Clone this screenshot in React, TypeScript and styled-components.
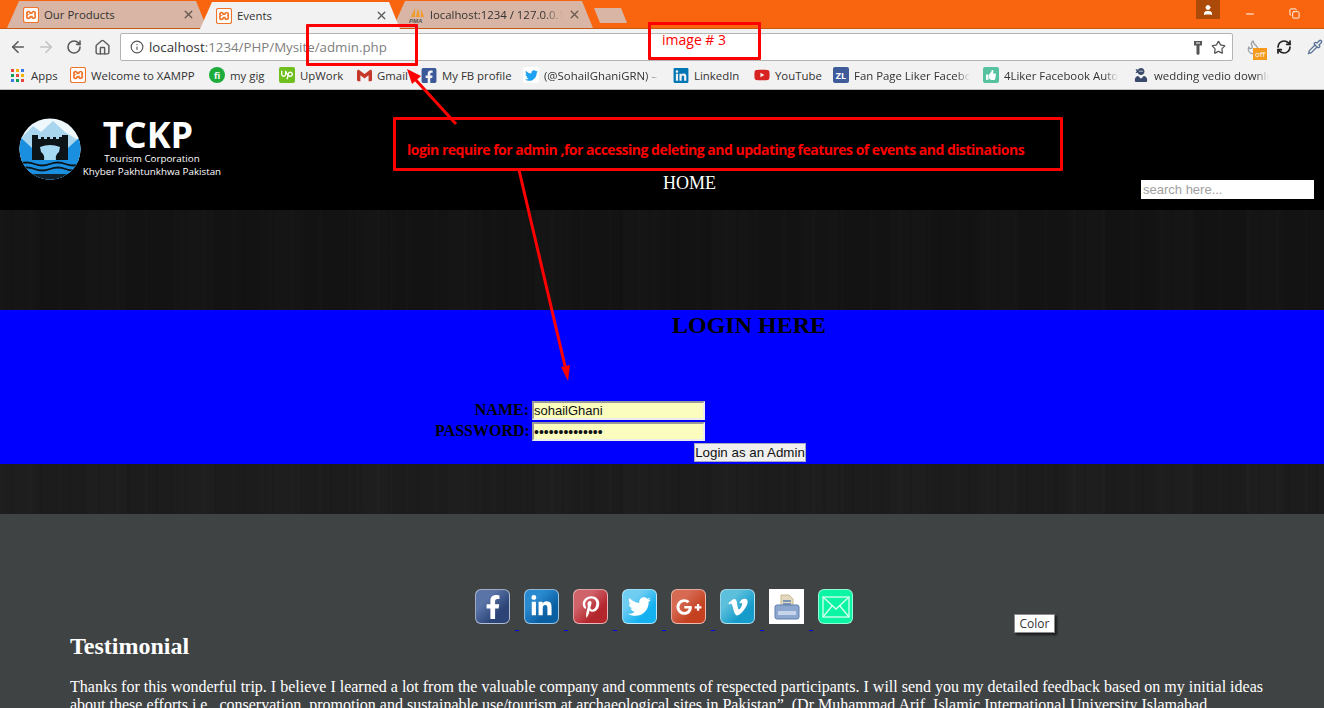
import React from 'react';
import styled, { createGlobalStyle } from 'styled-components';
import { ArrowLeft, ArrowRight, RotateCw, Home, Info, Star, X, Minus, Copy, User, RefreshCw, Pipette, Flame } from 'lucide-react';
import {
  FaFacebookF, FaFacebookSquare, FaLinkedinIn, FaPinterestP, FaTwitter, FaGooglePlusG, FaVimeoV, FaLinkedin, FaYoutube, FaThumbsUp, FaUserNinja,
} from 'react-icons/fa';
import { SiXampp, SiGmail, SiUpwork } from 'react-icons/si';

const GlobalStyle = createGlobalStyle`
  html, body {
    margin: 0;
    padding: 0;
    background: #3f4344;
  }
`;

const ORANGE = '#f9650e';

const Page = styled.div`
  position: relative;
  width: 1324px;
  height: 708px;
  overflow: hidden;
  font-family: "Liberation Serif", serif;
`;

const TabStrip = styled.div`
  display: flex;
  align-items: flex-end;
  height: 28px;
  padding-left: 7px;
  background: ${ORANGE};
  border-bottom: 1px solid #c8590f;
  box-sizing: content-box;
`;

const Tab = styled.div<{ $active?: boolean }>`
  position: relative;
  z-index: ${p => (p.$active ? 2 : 1)};
  display: flex;
  align-items: center;
  gap: 5px;
  width: 200px;
  height: 27px;
  margin-right: -7px;
  margin-bottom: ${p => (p.$active ? '-1px' : '0')};
  padding: 0 12px 0 16px;
  box-sizing: border-box;
  background: ${p => (p.$active ? '#f2f2f2' : '#d8b5a4')};
  clip-path: polygon(0 100%, 12px 0, calc(100% - 11px) 0, 100% 100%);
  font: 11.4px "Open Sans", sans-serif;
  color: #333;
  white-space: nowrap;
`;

const TabTitle = styled.span<{ $fade?: boolean }>`
  flex: 1;
  overflow: hidden;
  ${p => p.$fade && 'mask-image: linear-gradient(90deg, #000 85%, transparent);'}
`;

const NewTab = styled.div`
  width: 33px;
  height: 15px;
  margin: 0 0 5px 8px;
  background: #d8b5a4;
  clip-path: polygon(0 0, 27px 0, 100% 100%, 6px 100%);
`;

const WindowControls = styled.div`
  display: flex;
  align-items: flex-start;
  margin-left: auto;
  align-self: flex-start;
  color: #fff;
`;

const Avatar = styled.div`
  display: flex;
  align-items: center;
  justify-content: center;
  width: 24px;
  height: 19px;
  margin-right: 8px;
  background: #ac4a0a;
`;

const WinButton = styled.div<{ $w: number }>`
  display: flex;
  align-items: center;
  justify-content: center;
  width: ${p => p.$w}px;
  height: 27px;
`;

const Toolbar = styled.div`
  display: flex;
  align-items: center;
  height: 28px;
  padding: 4px 0 0 4px;
  background: #f2f2f2;
  color: #5a5a5a;
`;

const NavButton = styled.div<{ $dim?: boolean }>`
  display: flex;
  justify-content: center;
  width: 28px;
  color: ${p => (p.$dim ? '#c4c4c4' : '#5a5a5a')};
`;

const Omnibox = styled.div`
  display: flex;
  align-items: center;
  width: 1113px;
  height: 28px;
  margin-left: 4px;
  padding: 0 6px 0 9px;
  box-sizing: border-box;
  background: #fff;
  border: 1px solid #b4b4b4;
  border-radius: 2px;
  font: 13.3px "Open Sans", sans-serif;
`;

const Url = styled.div`
  flex: 1;
  margin-left: 5px;
  color: #808080;
  span { color: #333; }
`;

const StarSlot = styled.span`
  display: flex;
  margin-left: 8px;
  color: #555;
`;

const Extensions = styled.div`
  display: flex;
  align-items: center;
  gap: 15px;
  margin-left: 12px;
`;

const ExtBadge = styled.div`
  position: relative;
  display: flex;
  color: #9aa0a5;
`;

const OffTag = styled.span`
  position: absolute;
  right: -6px;
  bottom: -5px;
  width: 14px;
  height: 12px;
  background: #f59a1c;
  color: #fff;
  font: 8px/12px "Open Sans", sans-serif;
  text-align: center;
`;

const Bookmarks = styled.div`
  display: flex;
  align-items: center;
  height: 28px;
  padding-left: 11px;
  background: #f2f2f2;
  border-bottom: 1px solid #bdbdbd;
  font: 11.4px "Open Sans", sans-serif;
  color: #333;
  white-space: nowrap;
`;

const Bookmark = styled.div<{ $left: number }>`
  display: flex;
  align-items: center;
  gap: 5px;
  margin-left: ${p => p.$left}px;
`;

const BookmarkLabel = styled.span<{ $w: number; $fade?: boolean }>`
  display: block;
  width: ${p => p.$w}px;
  ${p => p.$fade && 'overflow: hidden; mask-image: linear-gradient(90deg, #000 88%, transparent);'}
`;

const IconTile = styled.span<{ $bg: string; $round?: boolean; $fg?: string }>`
  display: flex;
  align-items: center;
  justify-content: center;
  flex: none;
  width: 16px;
  height: 16px;
  background: ${p => p.$bg};
  color: ${p => p.$fg || '#fff'};
  border-radius: ${p => (p.$round ? '50%' : '2px')};
  font: bold 9px "Open Sans", sans-serif;
`;

const AppsGrid = styled.span`
  display: grid;
  grid-template-columns: repeat(3, 3px);
  gap: 2px;
  margin-right: 2px;
`;

const AppsDot = styled.i<{ $c: string }>`
  width: 3px;
  height: 3px;
  background: ${p => p.$c};
`;

const Header = styled.header`
  display: flex;
  height: 120px;
  background: #000;
  color: #fff;
`;

const LogoMark = styled.svg`
  width: 62px;
  height: 62px;
  margin: 28px 0 0 19px;
`;

const Brand = styled.div`
  width: 141px;
  padding-top: 27px;
  font-family: "Open Sans", sans-serif;
  text-align: center;
`;

const BrandName = styled.div`
  padding-right: 7px;
  font-size: 36px;
  font-weight: 700;
  line-height: 35px;
`;

const BrandLine = styled.div`
  padding-left: 1px;
  font-size: 9.8px;
  line-height: 13px;
  white-space: nowrap;
`;

const Nav = styled.a`
  align-self: flex-start;
  margin: 83px 0 0 441px;
  font-size: 18px;
  line-height: 20px;
  color: #fff;
`;

const Search = styled.input`
  align-self: flex-start;
  width: 173px;
  height: 19px;
  margin: 90px 10px 0 auto;
  padding: 1px 2px;
  box-sizing: border-box;
  border: 0;
  background: #fff;
  font: 13px "Liberation Sans", sans-serif;
  &::placeholder { color: #a0a0a0; opacity: 1; }
`;

const Wood = styled.div<{ $h: number; $base: string }>`
  height: ${p => p.$h}px;
  background:
    repeating-linear-gradient(90deg, rgba(255,255,255,0.008) 0 3px, transparent 3px 11px, rgba(0,0,0,0.08) 11px 13px, transparent 13px 29px),
    repeating-linear-gradient(90deg, rgba(255,255,255,0.008) 0 37px, transparent 37px 89px),
    ${p => p.$base};
`;

const LoginPanel = styled.section`
  height: 154px;
  background: #0000ff;
  color: #000;
`;

const LoginTitle = styled.h2`
  margin: 0 0 0 672px;
  padding-top: 2px;
  font-size: 24px;
  line-height: 27px;
`;

const LoginForm = styled.form`
  display: grid;
  grid-template-columns: 94px 174px;
  grid-auto-rows: 21px;
  column-gap: 3px;
  margin: 62px 0 0 435px;
`;

const FieldLabel = styled.label`
  font-size: 16px;
  font-weight: 700;
  line-height: 18px;
  text-align: right;
  white-space: nowrap;
`;

const FieldInput = styled.input`
  width: 173px;
  height: 19px;
  padding: 0;
  box-sizing: border-box;
  border: 2px solid #ececec;
  border-top-color: #9a9a9a;
  border-left-color: #9a9a9a;
  background: #fafdbd;
  font: 13px "Liberation Sans", sans-serif;
  color: #111;
  &[type='password'] { font-size: 14px; }
`;

const SubmitButton = styled.button`
  display: block;
  width: 112px;
  height: 19px;
  margin-left: 694px;
  padding: 0;
  border: 1px solid #a8a8c0;
  background: #efefef;
  font: 13.33px "Liberation Sans", sans-serif;
  color: #111;
  white-space: nowrap;
`;

const Footer = styled.footer`
  height: 194px;
  padding-left: 70px;
  background: #3f4344;
  color: #fff;
`;

const SocialRow = styled.div`
  display: flex;
  gap: 5px;
  margin-left: 405px;
  padding-top: 75px;
`;

const SocialLink = styled.a`
  display: flex;
  align-items: flex-end;
  gap: 5px;
  text-decoration: none;
`;

const SocialDash = styled.i`
  width: 4px;
  height: 1px;
  background: #0000ee;
`;

const SocialTile = styled.span<{ $bg: string; $plain?: boolean }>`
  display: flex;
  align-items: center;
  justify-content: center;
  width: 35px;
  height: 35px;
  margin-bottom: 7px;
  box-sizing: border-box;
  background: ${p => p.$bg};
  color: #fff;
  border: ${p => (p.$plain ? '0' : '1px solid rgba(255,255,255,0.55)')};
  border-radius: ${p => (p.$plain ? '0' : '6px')};
`;

const TestimonialTitle = styled.h2`
  margin: 0;
  padding-top: 2px;
  font-size: 24px;
  line-height: 27px;
`;

const TestimonialText = styled.p`
  width: 1200px;
  margin: 18px 0 0;
  font-size: 16px;
  line-height: 18px;
`;

const Tooltip = styled.div`
  position: absolute;
  left: 1014px;
  top: 614px;
  width: 41px;
  height: 19px;
  box-sizing: border-box;
  background: #fff;
  border: 1px solid #8c8c8c;
  box-shadow: 2px 2px 2px rgba(0, 0, 0, 0.6);
  font: 12px/17px "Open Sans", sans-serif;
  color: #333;
  text-align: center;
`;

const Callout = styled.div<{ $x: number; $y: number; $w: number; $h: number }>`
  position: absolute;
  z-index: 3;
  left: ${p => p.$x}px;
  top: ${p => p.$y}px;
  width: ${p => p.$w}px;
  height: ${p => p.$h}px;
  box-sizing: border-box;
  border: 3px solid #ff0000;
  border-radius: 1px;
`;

const CalloutLabel = styled.span`
  position: absolute;
  left: 11px;
  top: 5px;
  font: 14px "Open Sans", sans-serif;
  color: #ff0000;
  white-space: nowrap;
`;

const CalloutNote = styled.span`
  position: absolute;
  left: 11px;
  top: 20px;
  font: bold 14px "Open Sans", sans-serif;
  letter-spacing: -0.5px;
  color: #ff0000;
  white-space: nowrap;
`;

const ArrowLayer = styled.svg`
  position: absolute;
  z-index: 3;
  left: 0;
  top: 0;
  pointer-events: none;
`;

const XamppTile = () => (
  <IconTile $bg="#f0752b"><SiXampp size={14} /></IconTile>
);

const PmaIcon = () => (
  <svg width="16" height="16" viewBox="0 0 16 16">
    <path d="M2 10L6 1v9zM7 10l2-9 2 9zM12 10V2l3 8z" fill="#f09a2a" />
    <text x="0" y="15.5" fontSize="6" fontWeight="700" fontStyle="italic" fontFamily="Liberation Sans" fill="#555">PMA</text>
  </svg>
);

const KeyIcon = () => (
  <svg width="10" height="15" viewBox="0 0 10 15" fill="#555">
    <path d="M1 1h8v4.500H6.500V14L5 15 3.500 14V5.500H1z" />
    <rect x="3" y="2.500" width="4" height="1" fill="#fff" />
  </svg>
);

const bookmarks = [
  { left: 12, w: 107, label: 'Welcome to XAMPP', icon: <XamppTile /> },
  { left: 11, w: 37, label: 'my gig', icon: <IconTile $bg="#1dac3a" $round>fi</IconTile> },
  { left: 12, w: 45, label: 'UpWork', icon: <IconTile $bg="#6fbf1f"><SiUpwork size={12} /></IconTile> },
  { left: 11, w: 32, label: 'Gmail', icon: <IconTile $bg="transparent" $fg="#c5382c"><SiGmail size={15} /></IconTile> },
  { left: 12, w: 70, label: 'My FB profile', icon: <IconTile $bg="transparent" $fg="#3b5998"><FaFacebookSquare size={17} /></IconTile> },
  { left: 11, w: 116, label: '(@SohailGhaniGRN) –', fade: true, icon: <IconTile $bg="#fff" $fg="#1da1f2"><FaTwitter size={13} /></IconTile> },
  { left: 13, w: 46, label: 'LinkedIn', icon: <IconTile $bg="transparent" $fg="#0077b5"><FaLinkedin size={17} /></IconTile> },
  { left: 14, w: 47, label: 'YouTube', icon: <IconTile $bg="transparent" $fg="#d92323"><FaYoutube size={16} /></IconTile> },
  { left: 11, w: 116, label: 'Fan Page Liker Facebook', fade: true, icon: <IconTile $bg="#3f5c9a">ZL</IconTile> },
  { left: 13, w: 114, label: '4Liker Facebook Auto', fade: true, icon: <IconTile $bg="#57c2a0"><FaThumbsUp size={10} /></IconTile> },
  { left: 15, w: 115, label: 'wedding vedio downlo', fade: true, icon: <IconTile $bg="transparent" $fg="#3a4a6a"><FaUserNinja size={14} /></IconTile> },
];

const PrintIcon = () => (
  <svg width="26" height="26" viewBox="0 0 26 26">
    <path d="M7 1h8l4 4v9H7z" fill="#e3d9c0" stroke="#c8b88a" />
    <path d="M9 7h8M9 10h8" stroke="#5f7fb0" strokeWidth="1.5" />
    <path d="M3 11h20a2 2 0 0 1 2 2v10a2 2 0 0 1-2 2H3a2 2 0 0 1-2-2V13a2 2 0 0 1 2-2z" fill="#8ea7cf" stroke="#5f7fb0" />
    <rect x="4" y="17" width="18" height="4" fill="#c7d5ea" />
  </svg>
);

const MailIcon = () => (
  <svg width="28" height="22" viewBox="0 0 28 22" fill="none" stroke="#d8fff0" strokeWidth="1.3">
    <rect x="1" y="1" width="26" height="20" />
    <path d="M1 1l13 12L27 1M1 21l9-11M27 21l-9-11" />
  </svg>
);

const socials = [
  { bg: 'linear-gradient(135deg,#5a74a8 30%,#2c4476 70%)', icon: <FaFacebookF size={24} /> },
  { bg: 'linear-gradient(135deg,#2a8ad0 30%,#0a5ea2 70%)', icon: <FaLinkedinIn size={23} /> },
  { bg: 'linear-gradient(135deg,#d0626a 30%,#b3262c 70%)', icon: <FaPinterestP size={22} /> },
  { bg: 'linear-gradient(135deg,#70cdf2 30%,#14b1f0 70%)', icon: <FaTwitter size={23} /> },
  { bg: 'linear-gradient(135deg,#d66a52 30%,#c4401f 70%)', icon: <FaGooglePlusG size={26} /> },
  { bg: 'linear-gradient(135deg,#5cc0dc 30%,#169ccb 70%)', icon: <FaVimeoV size={22} /> },
  { bg: '#fff', plain: true, icon: <PrintIcon /> },
  { bg: '#0bf5a5', icon: <MailIcon /> },
];

export default function App() {
  return (
    <Page>
      <GlobalStyle />

      <TabStrip>
        <Tab>
          <XamppTile />
          <TabTitle>Our Products</TabTitle>
          <X size={13} strokeWidth={2.5} color="#6a5a52" />
        </Tab>
        <Tab $active>
          <XamppTile />
          <TabTitle>Events</TabTitle>
          <X size={13} strokeWidth={2.5} color="#5a5a5a" />
        </Tab>
        <Tab>
          <PmaIcon />
          <TabTitle $fade>localhost:1234 / 127.0.0.1</TabTitle>
          <X size={13} strokeWidth={2.5} color="#6a5a52" />
        </Tab>
        <NewTab />
        <WindowControls>
          <Avatar><User size={12} fill="#fff" /></Avatar>
          <WinButton $w={44}><Minus size={12} /></WinButton>
          <WinButton $w={44}><Copy size={11} /></WinButton>
          <WinButton $w={8} />
        </WindowControls>
      </TabStrip>

      <Toolbar>
        <NavButton><ArrowLeft size={18} strokeWidth={2.2} /></NavButton>
        <NavButton $dim><ArrowRight size={18} strokeWidth={2.2} /></NavButton>
        <NavButton><RotateCw size={16} strokeWidth={2.4} /></NavButton>
        <NavButton><Home size={17} strokeWidth={2} /></NavButton>
        <Omnibox>
          <Info size={14} color="#555" />
          <Url><span>localhost</span>:1234/PHP/Mysite/admin.php</Url>
          <KeyIcon />
          <StarSlot><Star size={15} /></StarSlot>
        </Omnibox>
        <Extensions>
          <ExtBadge><Flame size={16} /><OffTag>off</OffTag></ExtBadge>
          <RefreshCw size={16} color="#222" strokeWidth={2.6} />
          <Pipette size={16} color="#5a7296" />
        </Extensions>
      </Toolbar>

      <Bookmarks>
        <Bookmark $left={0}>
          <AppsGrid>
            {['#e8453c', '#f4b400', '#3b78e7', '#0f9d58', '#e8453c', '#f4b400', '#3b78e7', '#0f9d58', '#e8453c'].map((c, i) => (
              <AppsDot key={i} $c={c} />
            ))}
          </AppsGrid>
          <BookmarkLabel $w={27}>Apps</BookmarkLabel>
        </Bookmark>
        {bookmarks.map(b => (
          <Bookmark key={b.label} $left={b.left}>
            {b.icon}
            <BookmarkLabel $w={b.w} $fade={b.fade}>{b.label}</BookmarkLabel>
          </Bookmark>
        ))}
      </Bookmarks>

      <Header>
        <LogoMark viewBox="0 0 62 62">
          <defs>
            <clipPath id="logoClip"><circle cx="31" cy="31" r="30.5" /></clipPath>
          </defs>
          <g clipPath="url(#logoClip)">
            <rect width="62" height="62" fill="#eef7fc" />
            <path d="M0 22 L14 8 L22 14 L34 3 L46 14 L62 24 V62 H0z" fill="#a9d6ee" />
            <path d="M0 18 L13 30 V44 H49 V30 L62 18 V62 H0z" fill="#1a8fe0" />
            <path d="M13 17h6v4h3v-2h3v2h3v-2h3v2h3v-2h3v2h3v-2h3v-2h6v27H13z" fill="#0d1418" />
            <path d="M21 29 Q31 25 41 29 L40 34 Q36 36 37 44 H25 Q26 36 22 34z" fill="#a6d9f2" />
            <rect y="42" width="62" height="20" fill="#1a8fe0" />
            <path d="M0 46 q8 -3 15.500 0 t15.500 0 t15.500 0 t15.500 0M0 51 q8 -3 15.500 0 t15.500 0 t15.500 0 t15.500 0" stroke="#0d1418" strokeWidth="1.8" fill="none" />
            <rect y="56" width="62" height="6" fill="#12202a" />
          </g>
        </LogoMark>
        <Brand>
          <BrandName>TCKP</BrandName>
          <BrandLine>Tourism Corporation</BrandLine>
          <BrandLine>Khyber Pakhtunkhwa Pakistan</BrandLine>
        </Brand>
        <Nav>HOME</Nav>
        <Search placeholder="search here..." />
      </Header>

      <Wood $h={100} $base="#131313" />

      <LoginPanel>
        <LoginTitle>LOGIN HERE</LoginTitle>
        <LoginForm>
          <FieldLabel>NAME:</FieldLabel>
          <FieldInput defaultValue="sohailGhani" />
          <FieldLabel>PASSWORD:</FieldLabel>
          <FieldInput type="password" defaultValue="sohailghani123" />
        </LoginForm>
        <SubmitButton type="button">Login as an Admin</SubmitButton>
      </LoginPanel>

      <Wood $h={50} $base="#1c1c1c" />

      <Footer>
        <SocialRow>
          {socials.map((s, i) => (
            <SocialLink key={i}>
              <SocialTile $bg={s.bg} $plain={s.plain}>{s.icon}</SocialTile>
              {i < socials.length - 1 && <SocialDash />}
            </SocialLink>
          ))}
        </SocialRow>
        <TestimonialTitle>Testimonial</TestimonialTitle>
        <TestimonialText>
          Thanks for this wonderful trip. I believe I learned a lot from the valuable company and comments of respected participants. I will send you my detailed feedback based on my initial ideas about these efforts i.e., conservation, promotion and sustainable use/tourism at archaeological sites in Pakistan”. (Dr Muhammad Arif, Islamic International University Islamabad
        </TestimonialText>
      </Footer>

      <Tooltip>Color</Tooltip>

      <Callout $x={306} $y={24} $w={112} $h={42} />
      <Callout $x={648} $y={22} $w={113} $h={38}>
        <CalloutLabel>image # 3</CalloutLabel>
      </Callout>
      <Callout $x={393} $y={117} $w={670} $h={54}>
        <CalloutNote>login require for admin ,for accessing deleting and updating features of events and distinations</CalloutNote>
      </Callout>

      <ArrowLayer width="1324" height="708">
        <path d="M456 124 L414 78" stroke="#f00" strokeWidth="3" fill="none" />
        <path d="M407 69 L421 76 L412 84z" fill="#f00" />
        <path d="M519 170 L565 366" stroke="#f00" strokeWidth="3" fill="none" />
        <path d="M568 381 L561 367 L570 365z" fill="#f00" />
      </ArrowLayer>
    </Page>
  );
}
